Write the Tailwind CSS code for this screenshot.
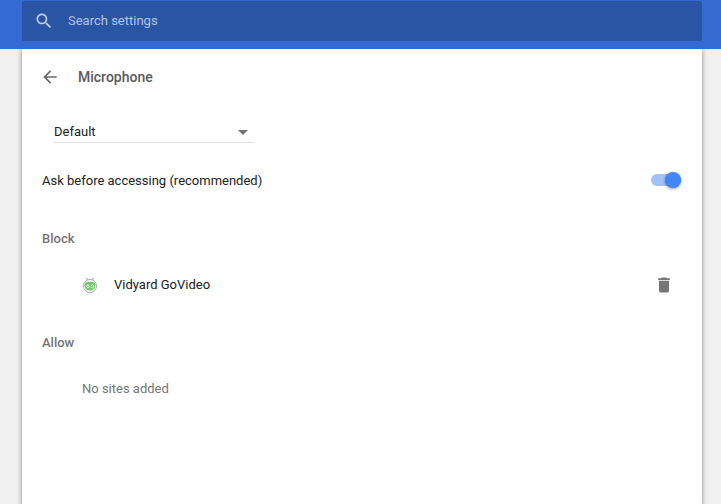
<!DOCTYPE html>
<html lang="en">
<head>
<meta charset="utf-8">
<title>Settings - Microphone</title>
<script src="https://cdn.jsdelivr.net/npm/@tailwindcss/browser@4"></script>
</head>
<body class="flex h-screen flex-col overflow-hidden bg-[#f0f0f0] font-[Roboto,sans-serif] text-[13px] leading-5 text-[#212121]">
  <header class="z-10 h-[49px] shrink-0 bg-[#366ad3] px-[22px] pt-px">
    <div class="flex h-10 w-[680px] items-center rounded-[2px] bg-[#2a55a5] pl-3 text-[#c0cde6]">
      <svg class="size-5" viewBox="0 0 24 24" fill="currentColor"><path d="M15.5 14h-.79l-.28-.27C15.41 12.59 16 11.11 16 9.5 16 5.91 13.09 3 9.5 3S3 5.91 3 9.5 5.91 16 9.5 16c1.61 0 3.09-.59 4.23-1.57l.27.28v.79l5 4.99L20.49 19l-4.99-5zm-6 0C7.01 14 5 11.99 5 9.5S7.01 5 9.5 5 14 7.01 14 9.5 11.99 14 9.5 14z"/></svg>
      <span class="ml-3.5 text-[#b2c3e3]">Search settings</span>
    </div>
  </header>
  <main class="ml-[22px] w-[680px] grow bg-white px-5 shadow-[0_1px_4px_1px_rgba(0,0,0,0.3)]">
    <div class="flex h-14 items-center">
      <svg class="-ml-0.5 size-5" viewBox="0 0 24 24" fill="#6a6a6a"><path d="M20 11H7.83l5.59-5.59L12 4l-8 8 8 8 1.41-1.41L7.83 13H20v-2z"/></svg>
      <h1 class="ml-[18px] text-sm font-medium text-[#5a5a5a]">Microphone</h1>
    </div>
    <div class="mt-4 ml-3 flex h-[22px] w-[200px] items-center justify-between border-b border-[#e0e0e0] pr-1.5">
      <span>Default</span>
      <svg class="mt-0.5 h-[5px] w-[10px]" viewBox="0 0 10 5" fill="#757575"><path d="M0 0h10L5 5z"/></svg>
    </div>
    <div class="mt-[18px] flex h-10 items-center justify-between">
      <span>Ask before accessing (recommended)</span>
      <div class="mr-px mb-0.5 flex h-3 w-[30px] items-center justify-end rounded-full bg-[#a1c2fa]">
        <div class="size-4 shrink-0 rounded-full bg-[#4285f4] shadow-[0_1px_3px_rgba(0,0,0,0.4)]"></div>
      </div>
    </div>
    <h2 class="mt-7 font-medium text-[#757575]">Block</h2>
    <div class="mt-4 flex h-10 items-center pl-10">
      <svg class="size-4" viewBox="0 0 16 16" fill="none">
        <path d="M4.500 1l1.300 2.500M11.500 1l-1.300 2.500M5 3.500h6" stroke="#8a9a91"/>
        <circle cx="8" cy="9" r="6.500" fill="#fff" stroke="#a3aea8"/>
        <path d="M3 6Q8 3 13 6a5.700 5.700 0 0 1 .3 3.500 5.400 4.900 0 0 1-10.600 0A5.700 5.700 0 0 1 3 6z" fill="#75c76e"/>
        <ellipse cx="6" cy="9.300" rx="1.200" ry="1.500" fill="#75c76e" stroke="#e6f5e4"/>
        <ellipse cx="10.500" cy="9.300" rx="1.200" ry="1.500" fill="#75c76e" stroke="#e6f5e4"/>
      </svg>
      <span class="ml-4">Vidyard GoVideo</span>
      <svg class="mr-2 ml-auto size-5" viewBox="0 0 24 24" fill="#757575"><path d="M6 19c0 1.100.9 2 2 2h8c1.100 0 2-.9 2-2V7H6v12zM19 4h-3.500l-1-1h-5l-1 1H5v2h14V4z"/></svg>
    </div>
    <h2 class="mt-7 font-medium text-[#757575]">Allow</h2>
    <p class="mt-[26px] pl-10 text-[#757575]">No sites added</p>
  </main>
</body>
</html>
